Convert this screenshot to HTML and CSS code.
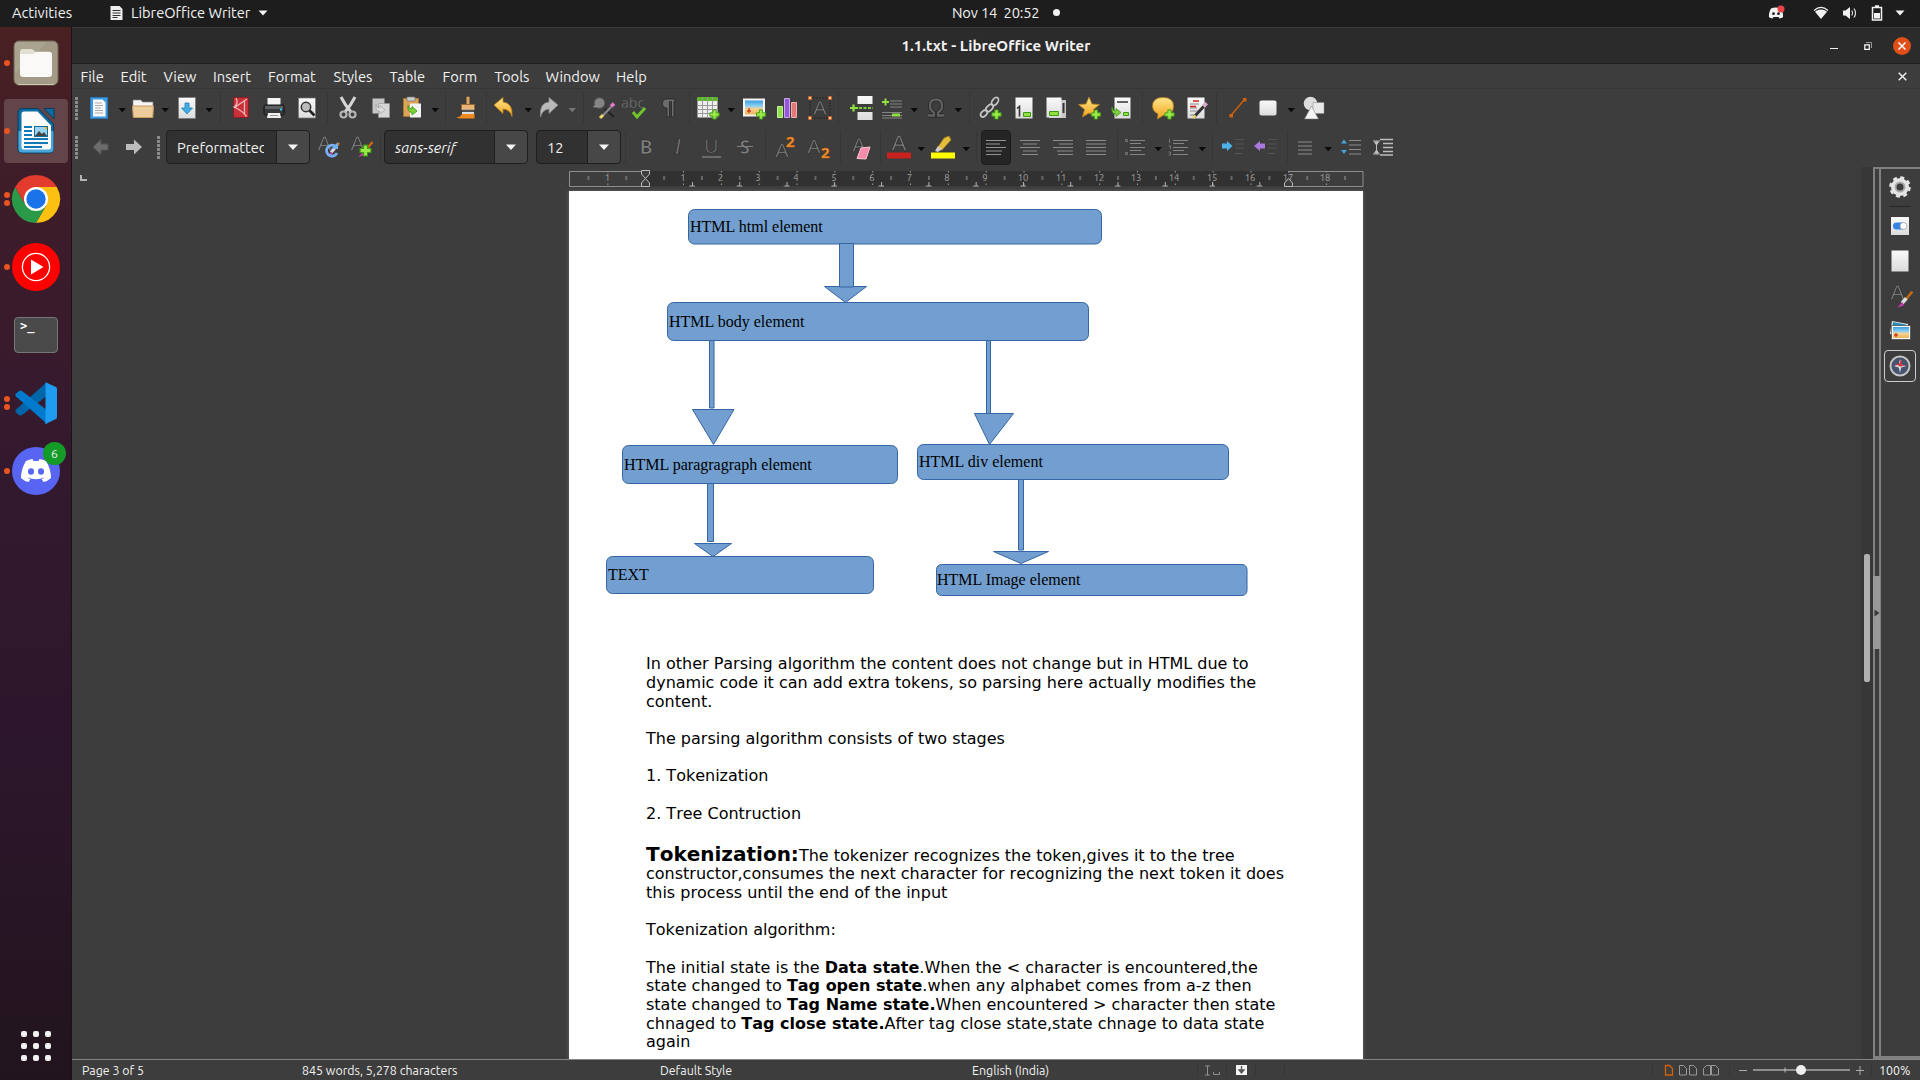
FILE: index.html
```html
<!DOCTYPE html>
<html lang="en">
<head>
<meta charset="utf-8">
<title>1.1.txt - LibreOffice Writer</title>
<link rel="stylesheet" href="styles.css">
</head>
<body>
<svg width="0" height="0" class="defs">
  <defs>
    <linearGradient id="paper" x1="0" y1="0" x2="0" y2="1"><stop offset="0" stop-color="#fafafa"/><stop offset="1" stop-color="#dcdcdc"/></linearGradient>
    <linearGradient id="gold" x1="0" y1="0" x2="0" y2="1"><stop offset="0" stop-color="#ffe58a"/><stop offset="1" stop-color="#f0a51e"/></linearGradient>
    <linearGradient id="sky" x1="0" y1="0" x2="0" y2="1"><stop offset="0" stop-color="#3b9fe0"/><stop offset=".4" stop-color="#8fd0f3"/><stop offset=".6" stop-color="#f6d28d"/><stop offset="1" stop-color="#eab45c"/></linearGradient>
    <symbol id="plus" viewBox="0 0 12 12"><path d="M4.2 1h3.6v3.2H11v3.6H7.800V11H4.200V7.800H1V4.200h3.200z" fill="#9be84a" stroke="#3f9a14"/></symbol>
    <symbol id="letterA" viewBox="0 0 20 20"><path d="M1.500 18.500 8.500 1.500h3l7 17h-2.600l-2-5H6.100l-2 5zM6.900 11.300h6.200L10 3.400z" fill="#7c7c7c" stroke="#262626" stroke-width=".7"/></symbol>
    <symbol id="brushS" viewBox="0 0 14 14"><path d="M13.500.5 8 7" stroke="#c96a10" stroke-width="2"/><path d="M8.500 6 5 10" stroke="#ddd" stroke-width="3"/><path d="M5.500 9 1 13.500l5.500-1.500z" fill="#c63db4"/></symbol>
    <symbol id="dd" viewBox="0 0 10 10"><path d="M1.500 3h7.500L5.200 7.300z" fill="currentColor"/></symbol>
  </defs>
</svg>

<header class="topbar">
  <span class="activities">Activities</span>
  <div class="appmenu">
    <svg width="13" height="16" viewBox="0 0 13 16"><path d="M.5 1h9l3 3v11H.5z" fill="#eee"/><path d="M2.500 5.500h8M2.500 8h8M2.500 10.500h8M2.500 12.500h5" stroke="#333"/></svg>
    <span>LibreOffice Writer</span>
    <svg width="10" height="6" viewBox="0 0 10 6"><path d="M.5.5h9L5 5.500z" fill="#f2f2f2"/></svg>
  </div>
  <div class="clock"><span>Nov 14&nbsp; 20:52</span><i></i></div>
  <div class="tray">
    <svg width="18" height="16" viewBox="0 0 18 16"><path d="M4 3.500c3-1.300 7-1.300 10 0 1.500 2.500 2.300 5.500 2 8.500-1 1-2.500 1.400-3.500 1.500l-1-1.500H6.500l-1 1.500C4.500 13.400 3 13 2 12c-.3-3 .5-6 2-8.500z" fill="#f2f2f2"/><circle cx="6.500" cy="8.700" r="1.400" fill="#1d1d1d"/><circle cx="11.500" cy="8.700" r="1.400" fill="#1d1d1d"/><circle cx="14" cy="4" r="3.500" fill="#ed4245"/></svg>
    <svg width="16" height="14" viewBox="0 0 16 14"><path d="M1 4.500c4.500-4 9.500-4 14 0" fill="none" stroke="#f2f2f2" stroke-width="1.200"/><path d="M2 5.800c3.800-3 8.200-3 12 0L8 13z" fill="#f2f2f2"/></svg>
    <svg width="16" height="14" viewBox="0 0 16 14"><path d="M1 4.500h2.500L8 1v12L3.500 9.500H1z" fill="#f2f2f2"/><path d="M9.800 4.500q1.600 2.500 0 5M12 2.500q3 4.500 0 9" fill="none" stroke="#ddd" stroke-width="1.200"/></svg>
    <svg width="12" height="16" viewBox="0 0 12 16"><path d="M4 1h4M1.500 2.500h9v12.500h-9z" fill="none" stroke="#f2f2f2" stroke-width="1.500"/><path d="M3 8h6v5.500H3z" fill="#f2f2f2"/></svg>
    <svg width="10" height="6" viewBox="0 0 10 6"><path d="M.5.500h9L5 5.500z" fill="#f2f2f2"/></svg>
  </div>
</header>

<div class="desktop">
  <nav class="dock">
    <div class="app one"><svg width="46" height="46" viewBox="0 0 46 46"><rect x="1" y="1" width="44" height="44" rx="5" fill="#a29a86" stroke="#6f6654"/><path d="M2 2h32L2 34z" fill="#fff" opacity=".09"/><path d="M7 12q0-3 3-3h8q2 0 3 1.500L23 13v6H7z" fill="#e3dfd3"/><path d="M7 14h13l3-2.300h13q3 0 3 3V34q0 3-3 3H10q-3 0-3-3z" fill="#faf9f8"/><path d="M5 44.500h36" stroke="#cdc7b4"/></svg></div>
    <div class="app one active"><svg width="40" height="48" viewBox="0 0 40 48"><path d="M7 1.500h15L37.500 17v25q0 4-4 4H6q-4 0-4-4V5.500q0-4 5-4z" fill="#0f6ca3" stroke="#0a3b5a"/><path d="M2.500 24h35v18q0 3.500-4 3.500H6q-3.500 0-3.500-3.500z" fill="#49a7da"/><path d="M8 4.500h13.500L35 18.500V40q0 2.500-2.500 2.500H8q-2.500 0-2.500-2.500V7q0-2.500 2.500-2.500z" fill="#fbfbfb"/><path d="M28 1.500h10V12z" fill="#0f6ca3" stroke="#0a3b5a"/><path d="M8 20h8M8 24h8M8 28h8M8 32h24M8 36h24M8 40h18" stroke="#1379b4" stroke-width="2"/><path d="M18 19h14v11H18z" fill="#0f6ca3"/><path d="M19 20h12v8.500H19z" fill="#9ad4ef"/><path d="m19 29 4-5 3 3 2-2 3 4z" fill="#444"/><path d="M28 20h3v3z" fill="#f5b400"/></svg></div>
    <div class="app two"><svg width="48" height="48" viewBox="0 0 48 48"><path d="M24 24 3.200 12A24 24 0 0 1 44.800 12z" fill="#e33b2e"/><path d="M24 12h20.800A24 24 0 0 1 24 48L34.400 30z" fill="#fcc010"/><path d="M3.200 12A24 24 0 0 0 24 48L34.400 30 24 24 13.600 30z" fill="#2a9a49"/><path d="M3.200 12h41.600H24L13.600 30z" fill="#e33b2e"/><circle cx="24" cy="24" r="12" fill="#fff"/><circle cx="24" cy="24" r="9.700" fill="#1a73e8"/></svg></div>
    <div class="app one"><svg width="48" height="48" viewBox="0 0 48 48"><circle cx="24" cy="24" r="24" fill="#f00"/><circle cx="24" cy="24" r="13.600" fill="none" stroke="#fff" stroke-width="1.300"/><path d="M19 16.500 31.500 24 19 31.500z" fill="#fff"/></svg></div>
    <div class="app"><div class="terminal">&gt;_</div></div>
    <div class="app two"><svg width="44" height="44" viewBox="0 0 44 44"><path d="M33 1 2 28.500q-1.500 1.500 0 3L5 34q1.300 1 3 0L38 11z" fill="#0065a9"/><path d="M33 43 2 15.500q-1.500-1.500 0-3L5 10q1.300-1 3 0L38 33z" fill="#007acc"/><path d="m32 1.500 10 4.500q1 .5 1 2v28q0 1.500-1 2l-10 4.800q-1.500.5-.5-1.300V2.500q-.5-1.500.5-1z" fill="#1f9cf0"/></svg></div>
    <div class="app one"><svg width="48" height="48" viewBox="0 0 48 48"><circle cx="24" cy="24" r="24" fill="#5765f2"/><path d="M14 14q3-1.700 6.500-2l1 2h5l1-2q3.500.300 6.500 2 5 8 5 17-3 3-7.500 4L29.500 32q2-.5 3-1.500-8.500 3.500-17 0 1 1 3 1.500L16.500 35Q12 34 9 31q0-9 5-17z" fill="#fff"/><ellipse cx="19" cy="24.500" rx="3" ry="3.200" fill="#5765f2"/><ellipse cx="29" cy="24.500" rx="3" ry="3.200" fill="#5765f2"/></svg><span class="badge">6</span></div>
    <div class="appgrid"><i></i><i></i><i></i><i></i><i></i><i></i><i></i><i></i><i></i></div>
  </nav>

  <main class="window">
    <div class="titlebar">
      <h1>1.1.txt - LibreOffice Writer</h1>
      <div class="winbtns">
        <svg width="8" height="8"><path d="M0 6.500h8" stroke="#eee"/></svg>
        <svg width="8" height="8" viewBox="0 0 8 8"><path d="M2 .5h5.500V6" fill="none" stroke="#999"/><path d="M.8 2.800h4.500v4.500H.8z" fill="none" stroke="#fff" stroke-width="1.200"/></svg>
        <svg width="18" height="18" viewBox="0 0 18 18"><circle cx="9" cy="9" r="9" fill="#e04f1a"/><path d="m5.500 5.500 7 7m0-7-7 7" stroke="#fff" stroke-width="1.500"/></svg>
      </div>
    </div>
    <div class="menubar">
      <span>File</span><span>Edit</span><span>View</span><span>Insert</span><span>Format</span><span>Styles</span><span>Table</span><span>Form</span><span>Tools</span><span>Window</span><span>Help</span>
      <svg width="9" height="9" viewBox="0 0 9 9"><path d="m.7.7 7.600 7.600m0-7.600L.7 8.300" stroke="#f2f2f2" stroke-width="1.400"/></svg>
    </div>

    <div class="toolbar standard">
      <b class="grip"></b>
      <svg class="ic" viewBox="0 0 28 28"><path d="M5.500 3.500h17v21h-17z" fill="#3f9be0" stroke="#2a78bb"/><path d="M8 5.500h9.500L20.500 8.500v14H8z" fill="#f8f8f8"/><path d="M10 9h7M10 11.500h8M10 14h6M10 16.500h8M10 19h8" stroke="#aaa"/></svg>
      <svg class="dd"><use href="#dd"/></svg>
      <svg class="ic" viewBox="0 0 28 28"><path d="M4 6h8l1.500 2H24v6H4z" fill="#f5f5f5" stroke="#888" stroke-width=".7"/><path d="M3.500 12h21l-.7 11.500H4.300z" fill="#edcd9c" stroke="#c79c5c"/></svg>
      <svg class="dd"><use href="#dd"/></svg>
      <svg class="ic" viewBox="0 0 28 28"><path d="M5.500 3.500h17v21h-17z" fill="url(#paper)" stroke="#777" stroke-width=".7"/><path d="M12 9h4v5h3.500L14 20l-5.500-6H12z" fill="#43aee6" stroke="#1f7fb5" stroke-width=".8"/></svg>
      <svg class="dd"><use href="#dd"/></svg>
      <b class="sep"></b>
      <svg class="ic" viewBox="0 0 28 28"><path d="M6.500 3.500h15v20h-15z" fill="#c8303a" stroke="#8b1d25"/><path d="M9 4q3 6-2.500 9.500M20 5q-9 6-12 8.500 7 3 11.500 9M17.500 7.500v12" stroke="#f0b8b8" stroke-width="1.300" fill="none"/></svg>
      <svg class="ic" viewBox="0 0 28 28"><path d="M7.500 4h13v8h-13z" fill="#f5f5f5"/><rect x="4" y="11" width="20" height="10" rx="1.500" fill="#35393c" stroke="#151515"/><path d="M5 12h18v3H5z" fill="#5c6063"/><path d="M8 19h12l1 5H7z" fill="#eee"/><path d="M10 21.500h8" stroke="#999"/><path d="M20 15.500h2" stroke="#2cc5f2" stroke-width="2"/></svg>
      <svg class="ic" viewBox="0 0 28 28"><path d="M5.500 4h17v20h-17z" fill="url(#paper)" stroke="#777" stroke-width=".7"/><circle cx="13" cy="13" r="4.700" fill="#bbb" stroke="#333" stroke-width="1.500"/><path d="m16.500 16.500 5 5" stroke="#222" stroke-width="2.600"/></svg>
      <b class="sep"></b>
      <svg class="ic" viewBox="0 0 28 28"><path d="M7 3q4 8 10 15M21 3q-4 8-10 15" stroke="#d5d5d5" stroke-width="3" fill="none"/><circle cx="9.500" cy="20.500" r="3" fill="none" stroke="#b5b5b5" stroke-width="2.200"/><circle cx="18.500" cy="20.500" r="3" fill="none" stroke="#b5b5b5" stroke-width="2.200"/></svg>
      <svg class="ic" viewBox="0 0 28 28"><path d="M5.500 4.500h12v15h-12z" fill="#c6c6c6"/><path d="M11.500 9.500h11v14h-11z" fill="#d6d6d6" stroke="#999" stroke-width=".6"/><path d="M9 10q0 4 4 4v-2.500l5 4.300-5 4.200v-2.500q-5-.5-4-7.500z" fill="#ddd" stroke="#aaa" stroke-width=".8"/></svg>
      <svg class="ic" viewBox="0 0 28 28"><path d="M5.500 4.500h15v18h-15z" fill="#dba458" stroke="#a8762f"/><path d="M9 3h8v4H9z" fill="#ccc" stroke="#777" stroke-width=".7"/><path d="M12 9.500h11v14H12z" fill="#f3f3f3"/><path d="M10 11q0 4 4 4v-2.500l5 4.500-5 4v-2.500q-5-.5-4-7z" fill="#7ed03b" stroke="#3f9a14" stroke-width=".9"/></svg>
      <svg class="dd"><use href="#dd"/></svg>
      <b class="sep"></b>
      <svg class="ic" viewBox="0 0 28 28"><path d="M12.500 3q1.500-1 3 0v7h-3z" fill="#e3a35c"/><path d="M7.500 10.500h13v5h-13z" fill="#e8b478" stroke="#9b6a32"/><path d="M8 15.500h12v5H8z" fill="#ddd"/><path d="M8 17h12" stroke="#222" stroke-width="1.500"/><path d="M8 20h12.500v4.500H6l-4-1q4 0 6-3.500z" fill="#f08a1c"/></svg>
      <b class="sep"></b>
      <svg class="ic" viewBox="0 0 28 28"><path d="M4 11 13 3.500v4.500q10 1 9 14.500-2-7-9-7.500v4.500z" fill="url(#gold)" stroke="#c0841a" stroke-width=".8"/></svg>
      <svg class="dd"><use href="#dd"/></svg>
      <svg class="ic" viewBox="0 0 28 28"><path d="M23 11 14 3.500v4.500Q4 9 5.500 23q2-7.500 8.500-8v4.500z" fill="#b9b9b9" stroke="#888" stroke-width=".8"/></svg>
      <svg class="dd dim"><use href="#dd"/></svg>
      <b class="sep"></b>
      <svg class="ic" viewBox="0 0 28 28"><circle cx="8.500" cy="9" r="5.300" fill="#858585" stroke="#555"/><path d="M2.500 12.500h4" stroke="#999" stroke-width="1.500"/><path d="m14 15 9 8" stroke="#222" stroke-width="2"/><path d="m11.500 22 8.500-9" stroke="#8a8a8a" stroke-width="2.200"/><path d="m20 12.500 3-3" stroke="#e07bd0" stroke-width="3.500"/><path d="m9 24 3-3" stroke="#f0d76a" stroke-width="3"/></svg>
      <svg class="ic wide" viewBox="0 0 28 28"><text x="0" y="14" class="abc">abc</text><path d="m12 18 4 5 8-9" fill="none" stroke="#6fc52c" stroke-width="3"/></svg>
      <svg class="ic" viewBox="0 0 28 28"><path d="M20 5h-8q-4.500 0-4.500 4.500T12 14v9h2.500V7.500h2V23H19V7.500h1z" fill="#6c6c6c" stroke="#262626" stroke-width=".8"/></svg>
      <b class="sep"></b>
      <svg class="ic" viewBox="0 0 28 28"><path d="M3.500 3.500h20v20h-20z" fill="#eee"/><path d="M3.500 3h20v4h-20z" fill="#58b924"/><path d="M3.500 11.500h20M3.500 15.500h20M3.500 19.500h20M8.500 3v21M13.500 3v21M18.500 3v21" stroke="#9a9a9a"/><use href="#plus" x="15" y="15" width="11" height="11"/></svg>
      <svg class="dd"><use href="#dd"/></svg>
      <svg class="ic" viewBox="0 0 28 28"><path d="M3 4.500h22v18H3z" fill="#f5f5f5"/><path d="M5 6.500h18v14H5z" fill="url(#sky)"/><path d="M9 14v5M7 17h4" stroke="#d33a1e" stroke-width="1.300"/><use href="#plus" x="15.500" y="15" width="11" height="11"/></svg>
      <svg class="ic" viewBox="0 0 28 28"><path d="M4.500 12.500h5v11h-5z" fill="#92e04e" stroke="#c5f59a"/><path d="M11.500 4.500h5v19h-5z" fill="#9657d8" stroke="#c9a6ee"/><path d="M18.500 8.500h5v15h-5z" fill="#e07878" stroke="#f5aeae"/></svg>
      <svg class="ic" viewBox="0 0 28 28"><path d="M4 4h20v20H4z" fill="none" stroke="#252525" stroke-dasharray="2 1"/><use href="#letterA" x="6" y="6" width="16" height="16"/><path d="M2.500 2.500h3v3h-3zM22.500 2.500h3v3h-3zM2.500 22.500h3v3h-3zM22.500 22.500h3v3h-3z" fill="#ffd0a8" stroke="#d0581e" stroke-width=".9"/></svg>
      <b class="sep"></b>
      <svg class="ic" viewBox="0 0 28 28"><path d="M10.500 2h15v8h-15zM10.500 18h15v8h-15z" fill="url(#paper)"/><path d="M12 14h14" stroke="#7ed03b" stroke-width="2" stroke-dasharray="3 1.500"/><path d="M3 14h8M6.500 10.500V17.500" stroke="#8fe040" stroke-width="2.200"/></svg>
      <svg class="ic" viewBox="0 0 28 28"><path d="M12 7h12M12 10h12M12 13h12M4 18.500h20M4 21.500h20M4 24h20" stroke="#858585" stroke-width="1.200"/><path d="M4 8h7M7.500 4.500v7" stroke="#8fe040" stroke-width="2"/><path d="M14 19.500h8v3h-8z" fill="#8fe040"/></svg>
      <svg class="dd"><use href="#dd"/></svg>
      <svg class="ic" viewBox="0 0 28 28"><path d="M6 21.500h6v-3q-4-2-4-7 0-6 6-6t6 6q0 5-4 7v3h6" fill="none" stroke="#262626" stroke-width="3.800"/><path d="M6 21.500h6v-3q-4-2-4-7 0-6 6-6t6 6q0 5-4 7v3h6" fill="none" stroke="#606060" stroke-width="2.300"/></svg>
      <svg class="dd"><use href="#dd"/></svg>
      <b class="sep"></b>
      <svg class="ic" viewBox="0 0 28 28"><g fill="none" stroke="#c4c4c4" stroke-width="1.800"><ellipse cx="18" cy="7.500" rx="2.800" ry="4.500" transform="rotate(35 18 7.500)"/><ellipse cx="12.500" cy="14" rx="2.500" ry="4.500" transform="rotate(45 12.500 14)"/><ellipse cx="7" cy="19.500" rx="2.500" ry="4" transform="rotate(45 7 19.500)"/></g><use href="#plus" x="14" y="15" width="11" height="11"/></svg>
      <svg class="ic" viewBox="0 0 28 28"><path d="M5.500 3.500h17v21h-17z" fill="url(#paper)"/><path d="m7 14.500 2.500-2v10" fill="none" stroke="#333" stroke-width="1.600"/><path d="M13.500 18.500h7v4h-7z" fill="#8fe040" stroke="#3f9a14"/></svg>
      <svg class="ic" viewBox="0 0 28 28"><path d="M7 6h17v18H7z" fill="#c8c8c8"/><path d="M4.500 3.500h15v20h-15z" fill="url(#paper)"/><path d="M21.500 9v10" stroke="#333" stroke-width="2"/><path d="M7.500 17.500h9v4h-9z" fill="#8fe040" stroke="#3f9a14"/></svg>
      <svg class="ic" viewBox="0 0 28 28"><path d="m13 3 3 7 7.500.5-6 5 2 7.500-6.500-4-6.500 4 2-7.500-6-5L10 10z" fill="url(#gold)" stroke="#b8801c" stroke-width=".8"/><use href="#plus" x="14.500" y="15" width="11" height="11"/></svg>
      <svg class="ic" viewBox="0 0 28 28"><path d="M6.500 3.500h16v21h-16z" fill="url(#paper)"/><path d="M9 8h11" stroke="#333" stroke-width="1.500"/><path d="M4 13q0 4 4 4v-2.500l5 4-5 4V20q-5 0-4-7z" fill="#7ed03b" stroke="#3f9a14" stroke-width=".8"/><path d="M15.500 18.500h5v3h-5z" fill="#8fe040" stroke="#3f9a14"/></svg>
      <b class="sep"></b>
      <svg class="ic" viewBox="0 0 28 28"><path d="M14 3.500q10.500 0 10.500 9T14 21.500L8.500 25l.5-5Q3.500 17 3.500 12.500q0-9 10.500-9z" fill="url(#gold)" stroke="#b8801c" stroke-width=".8"/><use href="#plus" x="15" y="15" width="11" height="11"/></svg>
      <svg class="ic" viewBox="0 0 28 28"><path d="M4.500 3.500h17v21h-17z" fill="url(#paper)"/><path d="M7 10h9M7 14h7M7 17h8M7 21h7" stroke="#888"/><path d="M10 7h6M7 12.500h6" stroke="#d3221c" stroke-width="1.500"/><path d="m11 23 11-12" stroke="#333" stroke-width="3"/><path d="m20.500 12.500 3-3.500" stroke="#d8a8c8" stroke-width="4"/><path d="m10 24 2.500-2.500" stroke="#f0d76a" stroke-width="2.500"/></svg>
      <b class="sep"></b>
      <svg class="ic" viewBox="0 0 28 28"><path d="M7 21.500 20 6" stroke="#d36208" stroke-width="1.300"/><path d="M5.500 20h3.500v3.500H5.500zM19 4h3.500v3.500H19z" fill="#d36208"/></svg>
      <svg class="ic" viewBox="0 0 28 28"><rect x="5.500" y="6.500" width="17" height="15" rx="2" fill="url(#paper)"/></svg>
      <svg class="dd"><use href="#dd"/></svg>
      <svg class="ic" viewBox="0 0 28 28"><circle cx="10.500" cy="9.500" r="6.800" fill="#ddd"/><path d="M13 8.500h11v11H13z" fill="#e9e9e9" stroke="#888" stroke-width=".5"/><path d="m11.500 12 7 13h-14z" fill="#f3f3f3" stroke="#777" stroke-width=".5"/></svg>
    </div>

    <div class="toolbar formatting">
      <b class="grip"></b>
      <svg class="ic" viewBox="0 0 28 28"><path d="M14 6.500v4.500h7v6h-7v4.500L6 14z" fill="#6c6c6c" stroke="#555"/></svg>
      <svg class="ic" viewBox="0 0 28 28"><path d="M15 6.500v4.500H7v6h8v4.500l8-7.500z" fill="#bcbcbc"/></svg>
      <b class="grip"></b>
      <div class="combo style"><span>Preformatted</span><svg width="12" height="7" viewBox="0 0 12 7"><path d="M1 .500h10L6 6z" fill="#f5f5f5"/></svg></div>
      <svg class="ic" viewBox="0 0 28 28"><use href="#letterA" x="2" y="2" width="17" height="17"/><use href="#brushS" x="12" y="8" width="14" height="17"/><path d="M21 13a5.500 5.500 0 1 0 2 7" fill="none" stroke="#76b0f0" stroke-width="2.800"/><path d="M17 16h7V9z" fill="#76b0f0"/></svg>
      <svg class="ic" viewBox="0 0 28 28"><use href="#letterA" x="2" y="2" width="17" height="17"/><use href="#brushS" x="10" y="8" width="16" height="17"/><use href="#plus" x="12" y="11" width="13" height="13"/></svg>
      <b class="sep"></b>
      <div class="combo font"><span>sans-serif</span><svg width="12" height="7" viewBox="0 0 12 7"><path d="M1 .500h10L6 6z" fill="#f5f5f5"/></svg></div>
      <div class="combo size"><span>12</span><svg width="12" height="7" viewBox="0 0 12 7"><path d="M1 .500h10L6 6z" fill="#f5f5f5"/></svg></div>
      <b class="sep"></b>
      <svg class="ic" viewBox="0 0 28 28"><text x="7.500" y="21" class="glyph bold">B</text></svg>
      <svg class="ic" viewBox="0 0 28 28"><text x="9" y="21" class="glyph ital">I</text></svg>
      <svg class="ic" viewBox="0 0 28 28"><text x="6" y="20" class="glyph">U</text><path d="M4 24h19" stroke="#999"/></svg>
      <svg class="ic" viewBox="0 0 28 28"><text x="8.500" y="21" class="glyph strong">S</text><path d="M6 13.500h16" stroke="#808080"/></svg>
      <b class="sep"></b>
      <svg class="ic" viewBox="0 0 28 28"><use href="#letterA" x="3" y="9" width="16" height="17"/><text x="15" y="14" class="supsub">2</text></svg>
      <svg class="ic" viewBox="0 0 28 28"><use href="#letterA" x="1" y="5" width="16" height="17"/><text x="16" y="25" class="supsub">2</text></svg>
      <b class="sep"></b>
      <svg class="ic" viewBox="0 0 28 28"><use href="#letterA" x="4" y="3" width="16" height="18"/><path d="m14 15 9-1-4 12-9-.5z" fill="#f48bab" stroke="#fbc3d3"/></svg>
      <b class="sep"></b>
      <svg class="ic" viewBox="0 0 28 28"><use href="#letterA" x="5" y="1" width="18" height="18"/><path d="M2 19.500h24v6H2z" fill="#c9211e"/></svg>
      <svg class="dd"><use href="#dd"/></svg>
      <svg class="ic" viewBox="0 0 28 28"><path d="m7 17 8-12 5-2 2 4-9 10z" fill="#e5bd3c" stroke="#a37d13" stroke-width=".8"/><path d="m6 18 3-5 4 3-4 3z" fill="#ccc"/><path d="M2 19.500h24v6H2z" fill="#ff0"/></svg>
      <svg class="dd"><use href="#dd"/></svg>
      <b class="sep"></b>
      <div class="pressed"><svg class="ln" viewBox="0 0 28 28"><path d="M4 7.500h20M4 11h14M4 14.500h20M4 18h16M4 21.500h15" stroke="#959595" stroke-width="1.200"/></svg></div>
      <svg class="ic ln" viewBox="0 0 28 28"><path d="M4 7.500h20M7 11h14M4 14.500h20M7 18h14M6 21.500h16" stroke="#8c8c8c" stroke-width="1.200"/></svg>
      <svg class="ic ln" viewBox="0 0 28 28"><path d="M4 7.500h20M10 11h14M4 14.500h20M8 18h16M9 21.500h15" stroke="#8c8c8c" stroke-width="1.200"/></svg>
      <svg class="ic ln" viewBox="0 0 28 28"><path d="M4 7.500h20M4 11h20M4 14.500h20M4 18h20M4 21.500h20" stroke="#8c8c8c" stroke-width="1.200"/></svg>
      <b class="sep"></b>
      <svg class="ic ln" viewBox="0 0 28 28"><path d="M9 7.500h15M9 10.500h11M9 14.500h15M9 17.500h11M9 21.500h15" stroke="#858585" stroke-width="1.200"/><path d="M4.500 6.500h2v2h-2zM4.500 19.500h2v2h-2z" fill="none" stroke="#777"/></svg>
      <svg class="dd"><use href="#dd"/></svg>
      <svg class="ic ln" viewBox="0 0 28 28"><path d="M9 7.500h15M9 10.500h11M9 14.500h15M9 17.500h11M9 21.500h15" stroke="#858585" stroke-width="1.200"/><path d="M5.500 6v4M4.500 13h2v3M4.500 19h2v3h-2" fill="none" stroke="#777"/></svg>
      <svg class="dd"><use href="#dd"/></svg>
      <b class="sep"></b>
      <svg class="ic ln" viewBox="0 0 28 28"><path d="M16 6.500h9M16 11h9M16 15h9M16 20.500h7" stroke="#555"/><path d="M3 10.500h5V8l5.500 5L8 18v-2.500H3z" fill="#4db2e8"/></svg>
      <svg class="ic ln" viewBox="0 0 28 28"><path d="M16 6.500h9M16 11h9M16 15h9M16 20.500h7" stroke="#555"/><path d="M13 10.500H8V8l-6 5 6 5v-2.500h5z" fill="#a878dc"/></svg>
      <b class="sep"></b>
      <svg class="ic ln" viewBox="0 0 28 28"><path d="M7 9h14M7 13h14M7 17h14M7 21h14" stroke="#8c8c8c" stroke-width="1.200"/></svg>
      <svg class="dd"><use href="#dd"/></svg>
      <svg class="ic ln" viewBox="0 0 28 28"><path d="M12 7.500h12M12 12h12M12 16.500h12M12 21h12" stroke="#8c8c8c" stroke-width="1.200"/><path d="m4 10.500 3-4 3 4zM4 17l3 4 3-4z" fill="#3fa6e0"/></svg>
      <svg class="ic ln" viewBox="0 0 28 28"><path d="M11 6.500h13M14 10.500h10M14 14.500h10M14 18.500h10M11 22h13" stroke="#bdbdbd" stroke-width="1.700"/><path d="M4 8h7M4 21h7M7.500 8v13M5.500 9l2 3 2-3zM5.500 20l2-3 2 3z" stroke="#bdbdbd" fill="#bdbdbd"/></svg>
    </div>

    <div class="workspace">
      <section class="docarea">
        <div class="rulerrow">
          <i class="tabmark"></i>
          <svg class="ruler" width="796" height="20" viewBox="568 170 796 20">
            <defs>
              <pattern id="cm" patternUnits="userSpaceOnUse" x="645.200" y="170" width="37.830" height="20"><path d="M.5 1v1.500M.5 13.500v1.500M18.900 6v4" stroke="#9a9a9a"/></pattern>
              <pattern id="tabs" patternUnits="userSpaceOnUse" x="644.700" y="170" width="47.280" height="20"><path d="M.5 12v4M44.800 16h2.500M0 16h3" stroke="#b5b5b5"/></pattern>
            </defs>
            <path d="M645 171h643v15H645z" fill="#313131"/>
            <path d="M645 171.500h-75.500v15H645M1288 171.500h75v15h-75" fill="none" stroke="#8f8f8f"/>
            <path d="M575 170h788v20H575z" fill="url(#cm)"/>
            <path d="M680 170h604v20H680z" fill="url(#tabs)"/>
            <g class="nums"><text x="607.500" y="181">1</text><text x="683" y="181">1</text><text x="720.500" y="181">2</text><text x="758" y="181">3</text><text x="796" y="181">4</text><text x="834" y="181">5</text><text x="872" y="181">6</text><text x="909.500" y="181">7</text><text x="947" y="181">8</text><text x="985" y="181">9</text><text x="1023" y="181">10</text><text x="1061" y="181">11</text><text x="1099" y="181">12</text><text x="1136" y="181">13</text><text x="1174" y="181">14</text><text x="1212" y="181">15</text><text x="1250" y="181">16</text><text x="1288" y="181">17</text><text x="1325" y="181">18</text></g>
            <path d="M641.500 170.500h8v3.500l-4 4.500-4-4.500zM641.500 186.500v-3.500l4-4.500 4 4.500v3.500zM1284.500 186.500v-3.500l4-4.500 4 4.500v3.500z" fill="#3d3d3d" stroke="#bbb"/>
          </svg>
        </div>
        <article class="page">
          <svg class="diagram" width="794" height="430" viewBox="569 191 794 430">
            <g fill="#729fcf" stroke="#3465a4">
              <rect x="688.500" y="209.500" width="413" height="34.500" rx="6"/>
              <path d="M824.500 286.500h42L845.500 302.500z"/><path d="M839.500 243.500h14v43.500h-14z"/>
              <rect x="667.500" y="302.500" width="421" height="38" rx="6"/>
              <path d="M709.500 340.500h4.500v67.500h-4.500z"/><path d="M692.500 409.500h41.500l-20.500 35z"/>
              <path d="M986.500 340.500h4v73h-4z"/><path d="M974.500 413.500h39l-24 31z"/>
              <rect x="622.500" y="445.500" width="275" height="38" rx="6"/>
              <rect x="917.500" y="444.500" width="311" height="35" rx="6"/>
              <path d="M707.500 483.500h6v58h-6z"/><path d="M694.500 543.500h37l-18.500 13z"/>
              <path d="M1018.500 479.500h5v70.500h-5z"/><path d="M993.500 551.500h55l-27.500 12z"/>
              <rect x="606.500" y="556.500" width="267" height="37" rx="6"/>
              <rect x="936.500" y="564.500" width="310.500" height="31" rx="5"/>
            </g>
            <g class="boxtext"><text x="690" y="232">HTML html element</text><text x="669" y="327">HTML body element</text><text x="624" y="470">HTML paragragraph element</text><text x="919" y="467">HTML div element</text><text x="608" y="580">TEXT</text><text x="937" y="585">HTML Image element</text></g>
          </svg>
          <div class="prose">
            <p>In other Parsing algorithm the content does not change but in HTML due to<br>dynamic code it can add extra tokens, so parsing here actually modifies the<br>content.</p>
            <p>The parsing algorithm consists of two stages</p>
            <p>1. Tokenization</p>
            <p>2. Tree Contruction</p>
            <p class="lead"><strong class="big">Tokenization:</strong>The tokenizer recognizes the token,gives it to the tree<br>constructor,consumes the next character for recognizing the next token it does<br>this process until the end of the input</p>
            <p>Tokenization algorithm:</p>
            <p>The initial state is the <strong>Data state</strong>.When the &lt; character is encountered,the<br>state changed to <strong>Tag open state</strong>.when any alphabet comes from a-z then<br>state changed to <strong>Tag Name state.</strong>When encountered &gt; character then state<br>chnaged to <strong>Tag close state.</strong>After tag close state,state chnage to data state<br>again</p>
          </div>
        </article>
      </section>
      <div class="scroll"><i></i></div>
      <div class="splitter"><span><svg width="6" height="8" viewBox="0 0 6 8"><path d="M.5.500v7L5.500 4z" fill="#3a3a3a"/></svg></span></div>
      <aside class="sidebar">
        <svg class="si" viewBox="0 0 28 28"><circle cx="14" cy="14" r="9" fill="#e4e4e4"/><circle cx="14" cy="14" r="9.500" fill="none" stroke="#e4e4e4" stroke-width="2.600" stroke-dasharray="4 3.460"/><circle cx="14" cy="14" r="4.500" fill="#3d3d3d" stroke="#aaa" stroke-width="2"/></svg>
        <hr>
        <svg class="si" viewBox="0 0 28 28"><path d="M5 5h18v18H5z" fill="url(#paper)"/><rect x="7" y="10.500" width="13" height="7" rx="3.500" fill="#3584e4"/><circle cx="17.500" cy="14" r="3.500" fill="#fff" stroke="#999" stroke-width=".7"/></svg>
        <svg class="si" viewBox="0 0 28 28"><path d="M5.500 3.500h17v21h-17z" fill="url(#paper)"/></svg>
        <svg class="si" viewBox="0 0 28 28"><use href="#letterA" x="3" y="2" width="17" height="17"/><use href="#brushS" x="10" y="9" width="17" height="17"/></svg>
        <svg class="si" viewBox="0 0 28 28"><path d="m6 4 16 3-2 13-16-3z" fill="#eee"/><path d="m7 5 13 2.500-1 6-13-2z" fill="#2a8bb5"/><path d="M5.500 8.500h19v14h-19z" fill="#f8f8f8" stroke="#333" stroke-width=".6"/><path d="M7 10h16v11H7z" fill="url(#sky)"/><path d="M10 16v4M8 18h4" stroke="#d33a1e" stroke-width="1.300"/></svg>
        <div class="selected"><svg class="si" viewBox="0 0 28 28"><circle cx="14" cy="14" r="9.500" fill="#46536e" stroke="#c4c4c4" stroke-width="2"/><path d="m14 7 1.200 5.500 5 1.500-5 1.500L14 21l-1.200-5.500-5-1.500 5-1.500z" fill="#ddd"/><path d="m7.500 11 5 1.500 3.500-5-.5 5.500 5 .5-6.500 1z" fill="#d8303a"/></svg></div>
      </aside>
    </div>

    <footer class="status">
      <span>Page 3 of 5</span><span>845 words, 5,278 characters</span><span>Default Style</span><span>English (India)</span>
      <svg width="110" height="18" viewBox="1190 0 110 18"><path d="M1197.500 3v12M1226.500 3v12M1255.500 3v12M1284.500 3v12" stroke="#363636"/><path d="M1205 5h5M1207.500 5v9M1205 14h5M1213.500 11v2.500h6V11" fill="none" stroke="#8f8f8f"/><path d="M1236 4h11v10h-11z" fill="#f5f5f5"/><path d="M1241.500 5v5M1239 9h5l-2.500 3z" stroke="#555" fill="#555" stroke-width="1.300"/></svg>
      <svg width="225" height="18" viewBox="1650 0 225 18"><path d="M1652.500 3v12M1729.500 3v12M1871.500 3v12" stroke="#363636"/><path d="M1665.500 4.500h4l3 3v6.500h-7z" fill="none" stroke="#d36208" stroke-width="1.300"/><path d="M1679.500 4.500h4l3 3v6.500h-7zM1689.500 4.500h4l3 3v6.500h-7zM1710.500 4.500h-4l-3 3v6.500h7zM1711.500 4.500h4l3 3v6.500h-7z" fill="none" stroke="#999"/><path d="M1739 9.500h8M1856 9.500h8M1860 5v9" stroke="#aaa"/><path d="M1753 9h97" stroke="#aaa" stroke-width="1.500"/><path d="M1785 6.500v5" stroke="#bbb"/><circle cx="1801" cy="9" r="5" fill="#eee"/></svg>
      <span>100%</span>
    </footer>
  </main>
</div>
</body>
</html>
```
FILE: styles.css
```css
* { box-sizing: border-box; }
html, body { margin: 0; height: 100%; overflow: hidden; }
body {
  width: 1920px; height: 1080px;
  display: flex; flex-direction: column;
  background: #3d3d3d; color: #f2f2f2;
  font: 14.670px "Ubuntu", "Noto Sans", sans-serif;
  white-space: nowrap;
}
svg { display: block; flex: none; overflow: visible; }
.defs { position: absolute; }

/* GNOME top bar */
.topbar { height: 27px; flex: none; padding-bottom: 2px; background: #1d1d1d; display: grid; grid-template-columns: 110px 842px 810px 158px; align-items: center; }
.activities { padding-left: 12px; }
.appmenu { display: flex; align-items: center; gap: 8px; }
.appmenu svg:last-child { margin-left: 0; }
.clock { display: flex; align-items: center; gap: 14px; letter-spacing: -.15px; }
.clock i { width: 7px; height: 7px; border-radius: 50%; background: #f2f2f2; }
.tray { display: grid; grid-template-columns: 46px 29px 29px 24px 10px; align-items: center; padding-left: 5px; }

.desktop { flex: 1; display: flex; min-height: 0; }

/* Dock */
.dock { width: 72px; flex: none; padding-top: 2px; display: flex; flex-direction: column; background: linear-gradient(#4a2022 0, #3f1d29 14%, #34192e 40%, #2c162b 70%, #21141d 100%); border-right: 1px solid #1c1218; }
.app { height: 64px; width: 64px; margin: 2px 4px; flex: none; display: grid; place-items: center; position: relative; border-radius: 4px; }
.app.active { background: #634549; }
.app.one::before, .app.two::before, .app.two::after { content: ""; position: absolute; left: 0; top: 29px; width: 6px; height: 6px; border-radius: 50%; background: #e95420; }
.app.two::before { top: 25px; }
.app.two::after { top: 33px; }
.terminal { width: 44px; height: 36px; border-radius: 4px; background: #4a4a4a; border: 1px solid #777; padding: 0 5px; font: bold 12px/16px "DejaVu Sans Mono", monospace; color: #fff; }
.badge { position: absolute; left: 39px; top: 3px; width: 23px; height: 23px; border-radius: 50%; background: #149a27; font-size: 12px; line-height: 23px; text-align: center; }
.appgrid { margin: auto 0 19px 21px; display: grid; grid-template-columns: repeat(3, 6px); gap: 6px; }
.appgrid i { width: 6px; height: 6px; border-radius: 2px; background: #f2f2f2; }

/* Window chrome */
.window { flex: 1; min-width: 0; display: flex; flex-direction: column; }
.titlebar { height: 37px; flex: none; background: #2b2b2b; border-top: 1px solid #3a3a3a; border-bottom: 1px solid #202020; display: grid; grid-template-columns: 1fr auto 1fr; align-items: center; }
.titlebar h1 { grid-column: 2; margin: 0; font-size: 15px; font-weight: 700; letter-spacing: .08px; }
.winbtns { justify-self: end; display: flex; align-items: center; gap: 26px; padding-right: 9px; }
.winbtns svg:last-child { margin-left: -5px; }
.menubar { height: 25px; flex: none; padding: 1px 0 0 8.600px; display: grid; grid-template-columns: 40px 43px 49.500px 55px 65.500px 56px 53px 52px 51px 70.500px 1fr 22px; align-items: center; border-bottom: 1px solid #363636; }

/* Toolbars: each column runs from one control's centre to the next */
.toolbar { flex: none; display: grid; align-items: center; padding-left: 4px; }
.standard { height: 38px; grid-template-columns: 23px 23px 21px 22px 22px 22px 11px 21px 33px 33px 20px 21px 33px 31px 23px 10px 23px 18px 18px 24px 21px 23px 11px 22px 31px 33px 20px 19px 23px 23px 33px 33px 18px 23px 31px 22px 22px 22px 11px 22px 33px 32px 34px 32px 20px 21px 34px 19px 22px 30px 23px 23px 20px; }
.formatting { height: 39px; padding-top: 1px; grid-template-columns: 25px 32px 25px 8px 162px 33px 19px 4px 152px 89px 21px 33px 33px 33px 20px 20px 34px 21px 21px 19px 19px 22px 22px 23px 10px 20px 34px 33px 33px 21px 18px 23px 20px 24px 10px 21px 33px 21px 18px 23px 23px 32px 20px; }
.ic { width: 28px; height: 28px; margin-left: -14px; }
.ic.wide { margin-left: -15px; }
.ln { width: 28px; height: 28px; }
.dd { width: 10px; height: 10px; margin: 3px 0 0 -5px; color: #0a0a0a; }
.dd.dim { color: #777; }
.sep { width: 1px; height: 32px; background: #363636; }
.grip { width: 3px; height: 23px; margin-left: -1px; background: repeating-linear-gradient(#8a8a8a 0 3px, transparent 3px 4px); }
.combo {
  height: 34px; display: grid; grid-template-columns: 1fr 33px; align-items: center;
  background: #313131 linear-gradient(90deg, transparent calc(100% - 33px), #1f1f1f calc(100% - 33px) calc(100% - 32px), #474747 calc(100% - 32px));
  border: 1px solid #1f1f1f; border-radius: 4px; overflow: hidden;
}
.combo span { margin-left: 10px; overflow: hidden; }
.combo svg { justify-self: center; }
.style { width: 144px; }
.style span { width: 87px; }
.font { width: 144px; }
.font span { font-style: italic; }
.size { width: 85px; }
.pressed { width: 30px; height: 35px; margin-left: -15px; background: #252525; border: 1px solid #1c1c1c; border-radius: 4px; display: grid; place-items: center; }
.glyph { font: 20px "Noto Sans", sans-serif; fill: #7c7c7c; stroke: #262626; stroke-width: .6; }
.glyph.bold, .glyph.strong { font-weight: 700; }
.glyph.strong { font-size: 19px; }
.glyph.ital { font-family: "Liberation Serif", serif; font-style: italic; font-size: 23px; }
.abc { font: 14px "Noto Sans", sans-serif; fill: #7c7c7c; stroke: #262626; stroke-width: .3; }
.supsub { font: bold 15px "Noto Sans", sans-serif; fill: #f59532; stroke: #c8600a; stroke-width: .5; }

/* Workspace */
.workspace { flex: 1; min-height: 0; display: flex; padding-top: 1px; }
.docarea { width: 1789px; display: flex; flex-direction: column; min-height: 0; overflow: hidden; }
.rulerrow { height: 24px; flex: none; display: flex; padding: 3px 0 0 8px; }
.tabmark { width: 7px; height: 6px; margin: 5px 481px 0 0; border-left: 2px solid #b5b5b5; border-bottom: 2px solid #b5b5b5; }
.nums { font: 9.500px "Ubuntu", "Noto Sans", sans-serif; fill: #a0a0a0; text-anchor: middle; }
.page { width: 794px; margin-left: 497px; flex: 1; min-height: 0; background: #fff; color: #000; box-shadow: 0 0 4px #666; }
.boxtext { font: 16px "Liberation Serif", serif; fill: #000; }
.prose { padding: 34.300px 0 0 77px; font: 16px/18.670px "DejaVu Sans", sans-serif; font-kerning: none; }
.prose p { margin: 0 0 18.670px; }
.prose .lead { padding-top: 2.600px; }
.big { font-size: 20px; line-height: 18px; }

.scroll { width: 12px; background: #373737; padding: 387px 0 0 3px; }
.scroll i { display: block; width: 6px; height: 128px; border-radius: 2px; background: #b0b0b0; }
.splitter { width: 8px; border: 2px solid #808080; border-bottom-width: 3px; padding-top: 407px; }
.splitter span { display: grid; place-items: center; width: 7px; height: 73px; margin-left: -2px; background: #999; }
.sidebar { width: 39px; border-top: 2px solid #808080; border-bottom: 3px solid #808080; padding: 4px 1px 0 0; display: flex; flex-direction: column; align-items: center; }
.si { width: 28px; height: 28px; }
.sidebar hr { width: 22px; height: 1px; border: 0; background: #262626; margin: 5px 0; }
.sidebar > .si + .si { margin-top: 7px; }
.selected { width: 32px; height: 32px; margin-top: 5px; border: 1px solid #ccc; border-radius: 4px; display: grid; place-items: center; }

/* Status bar */
.status { height: 21px; flex: none; border-top: 1px solid #858585; padding: 0 0 0 10px; display: grid; grid-template-columns: 220px 358px 312px 218px 460px 229px 1fr; align-items: center; font-size: 12.400px; }
```
